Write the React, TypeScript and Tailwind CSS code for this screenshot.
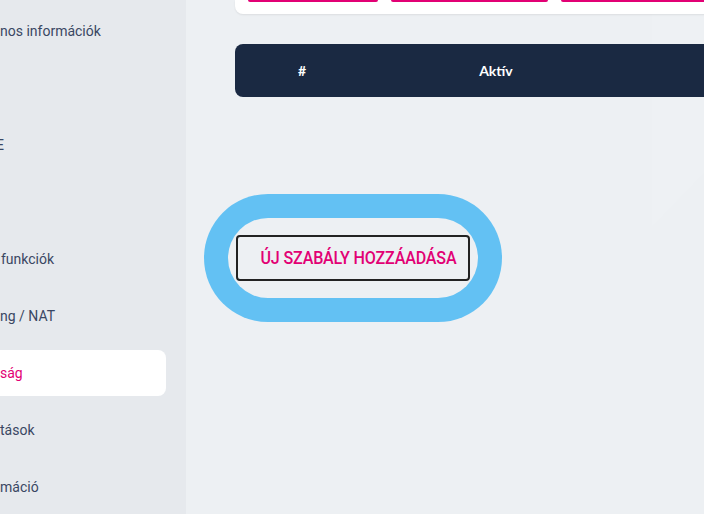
const menu = [
  { label: 'nos információk', shift: 'ml-0' },
  { label: '', shift: 'ml-0' },
  { label: 'E', shift: 'ml-[-4px]' },
  { label: '', shift: 'ml-0' },
  { label: 'funkciók', shift: 'ml-[1px]' },
  { label: 'ng / NAT', shift: 'ml-0' },
  { label: 'ság', shift: 'ml-0', active: true },
  { label: 'tások', shift: 'ml-0' },
  { label: 'máció', shift: 'ml-0' },
]

const tabs = ['w-[130px]', 'w-[157px]', 'w-[160px]']

export default function App() {
  return (
    <div className="flex h-[514px] w-[704px] overflow-hidden bg-[#edf0f3] font-['Roboto',sans-serif]">
      <aside className="w-[186px] shrink-0 overflow-hidden bg-[#e6e9ed] pt-[8px]">
        <ul className="flex flex-col gap-[11px] pr-[20px]">
          {menu.map((item, i) => (
            <li
              key={i}
              className={`flex h-[46px] items-center rounded-r-lg text-[14px] ${
                item.active ? 'bg-white text-[#e20074]' : 'text-[#3a4763]'
              }`}
            >
              <span className={`whitespace-nowrap ${item.shift}`}>{item.label}</span>
            </li>
          ))}
        </ul>
      </aside>

      <main className="relative flex-1 pl-[49px]">
        <div className="pointer-events-none absolute right-0 top-0 h-[226px] w-[82px] bg-[#eef1f4] [clip-path:polygon(0_0,100%_0,100%_63%,0_100%)]" />

        <div className="relative flex gap-[13px] rounded-b-lg bg-white px-[13px] pb-[12px] shadow-[0_1px_2px_rgba(0,0,0,0.08)]">
          {tabs.map((w, i) => (
            <div key={i} className={`${w} h-[2px] shrink-0 rounded-b-[3px] bg-[#e20074]`} />
          ))}
        </div>

        <div className="relative mt-[30px] flex h-[53px] items-center rounded-l-lg bg-[#1a2942] font-['Lato',sans-serif] text-[14px] font-bold text-white">
          <span className="ml-[63px]">#</span>
          <span className="ml-[173px]">Aktív</span>
        </div>

        <div className="relative ml-[-7px] mt-[121px] flex h-[80px] w-[250px] items-center justify-center rounded-full ring-[24px] ring-[#63c1f3]">
          <button className="flex h-[46px] w-[234px] items-center justify-center rounded-[4px] border-2 border-[#222] pl-[10px] pr-0 text-[#e20074]">
            <span className="inline-block scale-x-[0.92] whitespace-nowrap text-[17.5px] font-medium tracking-[-0.2px]">
              ÚJ SZABÁLY HOZZÁADÁSA
            </span>
          </button>
        </div>
      </main>
    </div>
  )
}
